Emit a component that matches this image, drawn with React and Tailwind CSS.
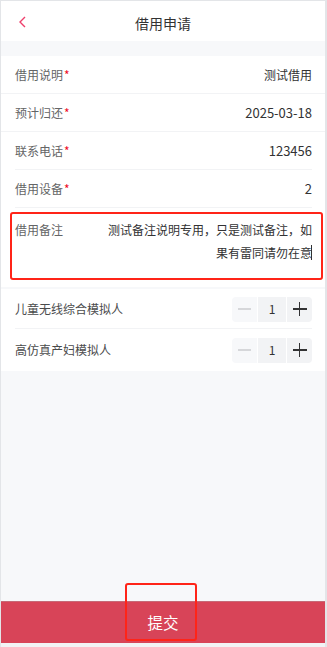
import React from "react";

const font = { fontFamily: '"Noto Sans CJK SC", "Noto Sans", sans-serif' };

function Row({ label, value, required, numeric, line = "inset" }) {
  return (
    <div className="relative h-[38px] flex items-center justify-between pl-[14px] pr-[13px]">
      <div className="flex items-center text-[12px] text-[#646566]">
        <span>{label}</span>
        {required && <span className="text-[#ee0a24] ml-[1px]">*</span>}
      </div>
      <div className={numeric ? "text-[13px] text-[#323233]" : "text-[12px] text-[#323233]"}>{value}</div>
      {line === "full" && <div className="absolute left-0 right-0 bottom-0 h-px bg-[#f2f3f5]" />}
      {line === "inset" && <div className="absolute left-[14px] right-[13px] bottom-0 h-px bg-[#f2f3f5]" />}
    </div>
  );
}

function Stepper() {
  return (
    <div className="flex items-center gap-[1px] h-[25px]">
      <div className="w-[25px] h-[25px] bg-[#f7f8fa] rounded-l-[4px] flex items-center justify-center">
        <div className="w-[13px] h-[1.5px] bg-[#d6d7da]" />
      </div>
      <div className="w-[28px] h-[25px] bg-[#f2f3f5] flex items-center justify-center text-[12px] text-[#323233]">1</div>
      <div className="relative w-[25px] h-[25px] bg-[#f2f3f5] rounded-r-[4px] flex items-center justify-center">
        <div className="w-[14px] h-[1.5px] bg-[#323233]" />
        <div className="absolute w-[1.5px] h-[14px] bg-[#323233]" />
      </div>
    </div>
  );
}

export default function App() {
  return (
    <div
      style={font}
      className="w-[327px] h-[647px] flex flex-col bg-[#f7f8fa] border-l border-t border-r-2 border-[#e3e5e8] overflow-hidden"
    >
      {/* header */}
      <div className="relative h-[40px] bg-white flex items-center justify-center shrink-0">
        <svg className="absolute left-[17px] top-[14px]" width="10" height="14" viewBox="0 0 10 14">
          <polyline points="7,2 2,7 7,12" fill="none" stroke="#ee3f6b" strokeWidth="1.4" />
        </svg>
        <div className="text-[14px] text-[#323233] mt-[4px]">借用申请</div>
      </div>

      <div className="h-[15px] shrink-0" />

      {/* card 1 */}
      <div className="bg-white shrink-0">
        <Row label="借用说明" value="测试借用" required line="full" />
        <Row label="预计归还" value="2025-03-18" required numeric line="full" />
        <Row label="联系电话" value="123456" required numeric line="inset" />
        <Row label="借用设备" value="2" required numeric line="inset" />
        <div className="relative h-[79px] flex pl-[14px] pr-[13px] pt-[10px]">
          <div className="w-[80px] shrink-0 text-[12px] text-[#646566] leading-[23px]">借用备注</div>
          <div className="flex-1 text-right text-[12px] text-[#323233] leading-[23px]">
            <div>测试备注说明专用，只是测试备注，如</div>
            <div className="flex justify-end items-center">
              <span>果有雷同请勿在意</span>
              <span className="inline-block w-px h-[15px] bg-[#323233] ml-[-1px]" />
            </div>
          </div>
          <div className="absolute left-[9px] right-[2px] top-[4px] h-[68px] border-2 border-[#ff2418] rounded-[3px]" />
        </div>
      </div>

      <div className="h-[2px] shrink-0" />

      {/* card 2 */}
      <div className="bg-white shrink-0">
        <div className="relative h-[40px] flex items-center justify-between pl-[14px] pr-[13px]">
          <span className="text-[12px] text-[#4a4b4c]">儿童无线综合模拟人</span>
          <Stepper />
          <div className="absolute left-[14px] right-[13px] bottom-0 h-px bg-[#f2f3f5]" />
        </div>
        <div className="h-[42px] flex items-center justify-between pl-[14px] pr-[13px]">
          <span className="text-[12px] text-[#4a4b4c]">高仿真产妇模拟人</span>
          <Stepper />
        </div>
      </div>

      <div className="flex-1" />

      {/* submit */}
      <div className="relative shrink-0">
        <div className="h-[42px] bg-[#d84458] border-t border-[#c66a77] flex items-center justify-center text-white text-[15.5px]">
          提交
        </div>
        <div className="absolute left-[124px] top-[-18px] w-[72px] h-[58px] border-2 border-[#ff2418] rounded-[3px]" />
      </div>
      <div className="h-[4px] shrink-0 bg-[#f2f3f5]" />
    </div>
  );
}
